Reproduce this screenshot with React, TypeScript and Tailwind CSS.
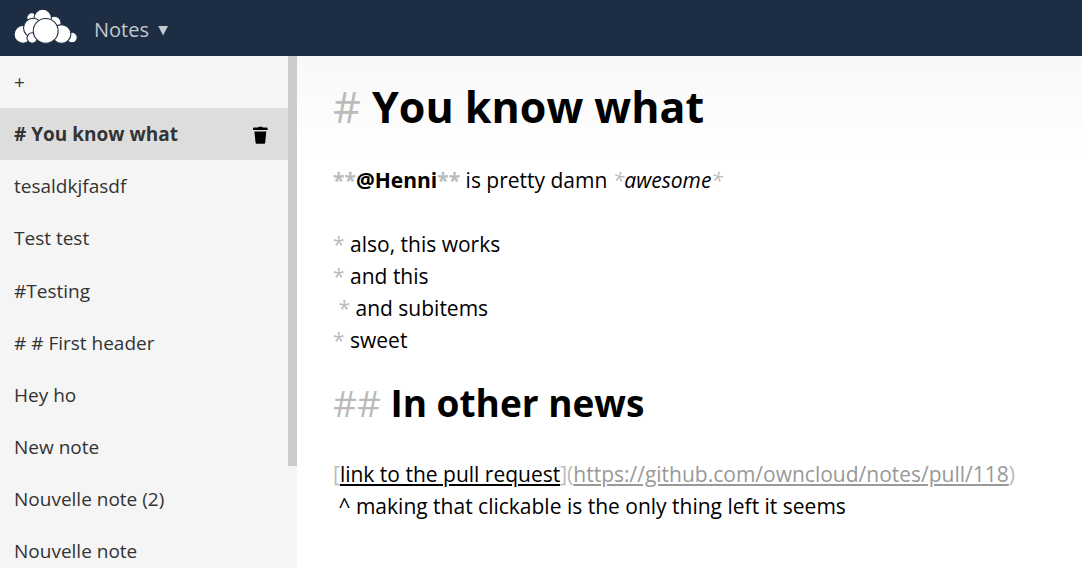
import type { ReactNode } from "react";

const notes = [
  "# You know what",
  "tesaldkjfasdf",
  "Test test",
  "#Testing",
  "# # First header",
  "Hey ho",
  "New note",
  "Nouvelle note (2)",
  "Nouvelle note",
];

function Mark({ children }: { children: ReactNode }) {
  return <span className="font-normal not-italic text-[#bbb]">{children}</span>;
}

function CloudLogo() {
  return (
    <svg
      className="h-[36px] w-[64px] shrink-0"
      viewBox="0 0 64 36"
      fill="#fff"
      stroke="#1d2d44"
      strokeWidth="1.1"
      role="img"
      aria-label="ownCloud"
    >
      <circle cx="17.8" cy="8.8" r="5" />
      <circle cx="40.5" cy="13.8" r="6.6" />
      <circle cx="28.7" cy="8.9" r="8.7" />
      <circle cx="58" cy="28.6" r="5.3" />
      <circle cx="9" cy="25.4" r="8.9" />
      <circle cx="19" cy="18.8" r="9.5" />
      <circle cx="47.5" cy="25" r="9.4" />
      <circle cx="18.2" cy="29" r="5.2" />
      <circle cx="31.7" cy="21.9" r="12.4" />
    </svg>
  );
}

function TrashIcon() {
  return (
    <svg className="h-[18px] w-4" viewBox="0 0 16 18" fill="#000" aria-hidden="true">
      <path d="M6 1.6Q6.1.8 6.9.8h3q.7 0 .8.8h3.9q1 0 1 1v1.5H1V2.6q0-1 1-1z" />
      <path d="M2.4 5.6h11.9l-1.1 11.2q-.1.9-1 .9H4.6q-.9 0-1-.9z" />
    </svg>
  );
}

export default function App() {
  return (
    <div className="flex h-screen flex-col overflow-hidden bg-white font-['Open_Sans',sans-serif]">
      <header className="flex h-14 shrink-0 items-center bg-[#1d2d44] px-3.5">
        <a href="#" className="flex pb-0.5">
          <CloudLogo />
        </a>
        <button type="button" className="ml-4 flex items-center gap-2 pt-1 text-xl text-[#c3c8cf]">
          Notes
          <svg className="h-3 w-3" viewBox="0 0 12 12" fill="currentColor" aria-hidden="true">
            <path d="M1.2 2h9.8L6.1 11.6z" />
          </svg>
        </button>
      </header>

      <div className="flex min-h-0 flex-1">
        <nav className="flex w-[297px] shrink-0 overflow-hidden bg-[#f5f5f5]" aria-label="Notes">
          <ul className="min-w-0 flex-1 text-[19px] leading-snug text-[#333]">
            <li>
              <button type="button" aria-label="New note" className="block w-full px-3.5 py-[13px] text-left">
                +
              </button>
            </li>
            {notes.map((note, index) => (
              <li key={note} className={index === 0 ? "flex items-center bg-[#ddd] font-bold" : "flex items-center"}>
                <a href="#" className="block flex-1 truncate px-3.5 py-[13px]">
                  {note}
                </a>
                {index === 0 && (
                  <button type="button" aria-label="Delete note" className="mr-5 pt-0.5">
                    <TrashIcon />
                  </button>
                )}
              </li>
            ))}
          </ul>
          <div className="h-4/5 w-[9px] shrink-0 bg-[#ccc]" />
        </nav>

        <main className="min-w-0 flex-1 bg-linear-to-b from-[#f8f8f8] to-white to-[100px] px-9 pt-5 text-[21px] leading-8 text-black">
          <h1 className="text-[43px] leading-[62px] font-bold">
            <Mark>#</Mark> You know what
          </h1>
          <p className="mt-[26px]">
            <strong>
              <span className="text-[#bbb]">**</span>@Henni<span className="text-[#bbb]">**</span>
            </strong>{" "}
            is pretty damn{" "}
            <em>
              <span className="text-[#bbb]">*</span>awesome<span className="text-[#bbb]">*</span>
            </em>
          </p>
          <ul className="mt-8 whitespace-pre-wrap">
            <li>
              <Mark>*</Mark> also, this works
            </li>
            <li>
              <Mark>*</Mark> and this
            </li>
            <li>
              {" "}
              <Mark>*</Mark> and subitems
            </li>
            <li>
              <Mark>*</Mark> sweet
            </li>
          </ul>
          <h2 className="mt-4 text-[37px] leading-[62px] font-bold">
            <Mark>##</Mark> In other news
          </h2>
          <p className="mt-6 whitespace-pre-wrap">
            <Mark>[</Mark>
            <a href="https://github.com/owncloud/notes/pull/118" className="underline">
              link to the pull request
            </a>
            <Mark>](</Mark>
            <a href="https://github.com/owncloud/notes/pull/118" className="text-[#999] underline">
              https://github.com/owncloud/notes/pull/118
            </a>
            <Mark>)</Mark>
            <br />
            {" "}^ making that clickable is the only thing left it seems
          </p>
        </main>
      </div>
    </div>
  );
}
